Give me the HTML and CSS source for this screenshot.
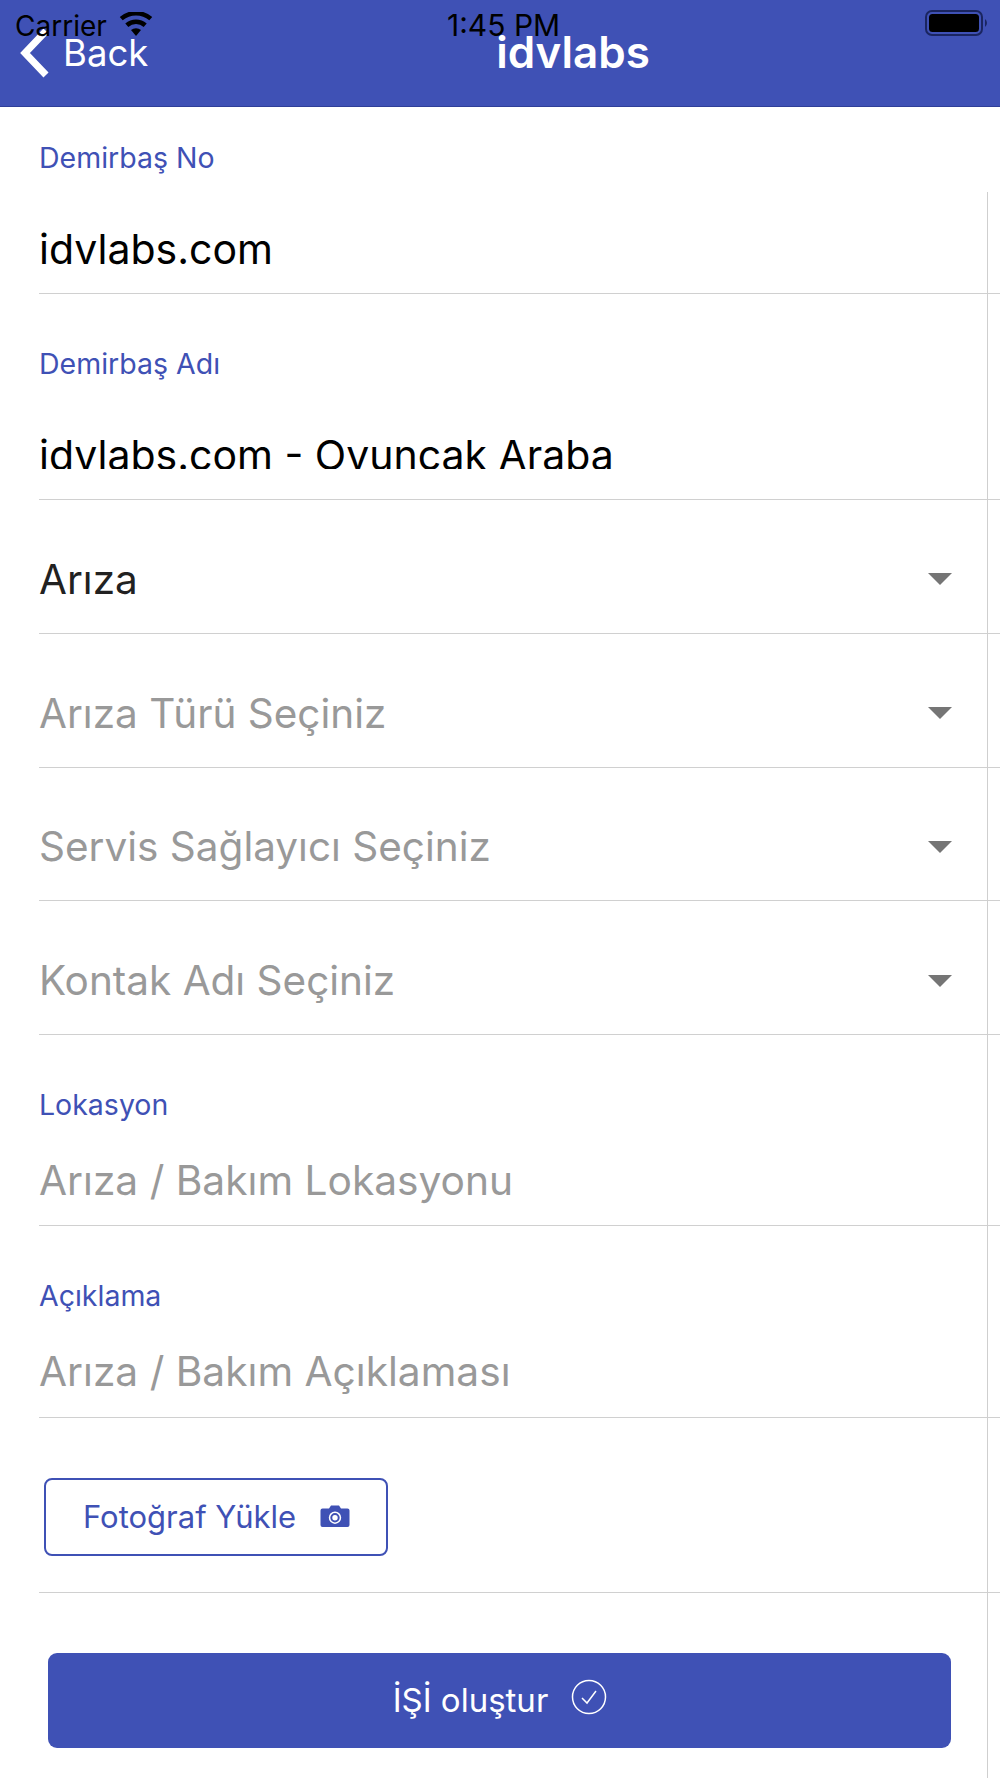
FILE: index.html
```html
<!DOCTYPE html>
<html lang="tr">
<head>
<meta charset="utf-8">
<title>idvlabs</title>
<link rel="stylesheet" href="styles.css">
</head>
<body>
<div class="screen">
  <div class="status">
    <div class="status-left">
      <span>Carrier</span>
      <svg class="wifi" viewBox="0 0 36 26"><path d="M18 26 L12.6 19.6 A8 8 0 0 1 23.4 19.6 Z"/><path d="M9.7 16.2 L6.4 12.4 A17.6 17.6 0 0 1 29.6 12.4 L26.3 16.2 A12.6 12.6 0 0 0 9.7 16.2 Z"/><path d="M3.6 9 L0.4 5.4 A27 27 0 0 1 35.6 5.4 L32.4 9 A22.4 22.4 0 0 0 3.6 9 Z"/></svg>
    </div>
    <div class="status-time">1:45 PM</div>
    <svg class="battery" viewBox="0 0 64 26"><rect x="1" y="1" width="56" height="24" rx="6" fill="none" stroke="#1a2560" stroke-width="2"/><rect x="4" y="4" width="50" height="18" rx="3.5" fill="#000"/><path d="M60 9 A5 5 0 0 1 60 17 Z" fill="#1a2560"/></svg>
  </div>
  <header class="nav">
    <div class="back">
      <svg class="chevron" viewBox="0 0 32 50"><path d="M27 3 L6 25 L27 47" fill="none" stroke="#fff" stroke-width="7"/></svg>
      <span>Back</span>
    </div>
    <div class="title">idvlabs</div>
  </header>
  <main class="form">
    <div class="field field-a">
      <label class="label">Demirbaş No</label>
      <div class="value">idvlabs.com</div>
    </div>
    <div class="field field-b">
      <label class="label label-low">Demirbaş Adı</label>
      <div class="value clipped">idvlabs.com - Oyuncak Araba</div>
    </div>
    <div class="select"><span class="select-text">Arıza</span><span class="caret"></span></div>
    <div class="select placeholder"><span class="select-text">Arıza Türü Seçiniz</span><span class="caret"></span></div>
    <div class="select placeholder"><span class="select-text">Servis Sağlayıcı Seçiniz</span><span class="caret"></span></div>
    <div class="select placeholder"><span class="select-text">Kontak Adı Seçiniz</span><span class="caret"></span></div>
    <div class="field field-c">
      <label class="label label-low">Lokasyon</label>
      <div class="input-text">Arıza / Bakım Lokasyonu</div>
    </div>
    <div class="field field-d">
      <label class="label label-low">Açıklama</label>
      <div class="input-text">Arıza / Bakım Açıklaması</div>
    </div>
    <div class="photo-row">
      <button class="photo-btn"><span>Fotoğraf Yükle</span>
        <svg class="camera" viewBox="0 0 30 22"><path fill-rule="evenodd" d="M2.5 3.5 H9 L11 0.5 H19 L21 3.5 H27.5 A2 2 0 0 1 29.5 5.5 V20 A2 2 0 0 1 27.5 22 H2.5 A2 2 0 0 1 0.5 20 V5.5 A2 2 0 0 1 2.5 3.5 Z M15 6.5 A6.2 6.2 0 1 0 15 18.9 A6.2 6.2 0 1 0 15 6.5 Z M15 8 A4.7 4.7 0 1 1 15 17.4 A4.7 4.7 0 1 1 15 8 Z M15 10 A2.7 2.7 0 1 0 15 15.4 A2.7 2.7 0 1 0 15 10 Z"/></svg>
      </button>
    </div>
    <div class="submit-row">
      <button class="submit-btn"><span>İŞİ oluştur</span>
        <svg class="check" viewBox="0 0 36 36"><circle cx="18" cy="18" r="16.5" fill="none" stroke="#fff" stroke-width="1.5"/><path d="M11 19 L16 24 L25 12" fill="none" stroke="#fff" stroke-width="1.5"/></svg>
      </button>
    </div>
  </main>
  <div class="scroll-line"></div>
</div>
</body>
</html>
```

FILE: styles.css
```css
* { box-sizing: border-box; }
html, body { margin: 0; padding: 0; }
body { background: #fff; font-family: Inter, Roboto, "Liberation Sans", sans-serif; }
.screen { position: relative; width: 1000px; height: 1778px; overflow: hidden; background: #fff; }

.status { position: absolute; top: 0; left: 0; width: 100%; height: 53px; color: #000; z-index: 2; }
.status-left { position: absolute; left: 15px; top: 8px; display: flex; align-items: flex-start; gap: 12px; font-size: 28px; line-height: 36px; }
.wifi { width: 34px; height: 24px; margin-top: 4px; fill: #000; }
.status-time { position: absolute; left: 447px; top: 7px; font-size: 30px; line-height: 36px; }
.battery { position: absolute; left: 925px; top: 10px; width: 64px; height: 26px; }

.nav { position: relative; height: 107px; background: #3f51b5; border-bottom: 1px solid #2f3f98; color: #fff; }
.back { position: absolute; left: 19px; top: 28px; display: flex; align-items: center; gap: 12px; font-size: 36.5px; line-height: 46px; }
.chevron { width: 32px; height: 50px; }
.title { padding: 27px 0 0 146px; text-align: center; font-size: 44px; font-weight: 600; line-height: 50px; }

.form { padding-left: 39px; }
.field { border-bottom: 1px solid #d0d0d0; overflow: hidden; }
.field-a { height: 187px; }
.field-b { height: 206px; }
.field-c { height: 191px; }
.field-d { height: 192px; }
.label { display: block; color: #3f51b5; font-size: 28.5px; line-height: 32px; padding-top: 35px; }
.label-low { padding-top: 54px; }
.value { color: #000; font-size: 41px; line-height: 50px; margin-top: 50px; }
.clipped { height: 39px; margin-top: 50px; overflow: hidden; }
.input-text { color: #999; font-size: 40.7px; line-height: 48px; margin-top: 36px; }

.select { display: flex; justify-content: space-between; align-items: center; height: 133.75px; padding: 26px 48px 0 0; border-bottom: 1px solid #d0d0d0; font-size: 40.5px; color: #212121; }
.placeholder { color: #999; }
.caret { width: 0; height: 0; border-left: 12px solid transparent; border-right: 12px solid transparent; border-top: 12px solid #757575; }

.photo-row { height: 175px; border-bottom: 1px solid #d0d0d0; padding: 60px 0 0 5px; }
.photo-btn { display: flex; align-items: center; gap: 24px; width: 344px; height: 78px; padding: 0 0 2px 37px; background: #fff; border: 2.5px solid #3f51b5; border-radius: 8px; color: #3f51b5; font-family: inherit; font-size: 31px; }
.camera { width: 30px; height: 22px; fill: #3f51b5; }

.submit-row { padding: 60px 48px 0 9px; }
.submit-btn { display: flex; align-items: center; justify-content: center; gap: 23px; width: 903px; height: 95px; padding: 0 0 2px 1px; background: #3f51b5; border: 0; border-radius: 9px; color: #fff; font-family: inherit; font-size: 33px; }
.check { width: 36px; height: 36px; margin-bottom: 6px; }

.scroll-line { position: absolute; left: 987px; top: 192px; bottom: 0; width: 1px; background: #cfcfcf; }
```
